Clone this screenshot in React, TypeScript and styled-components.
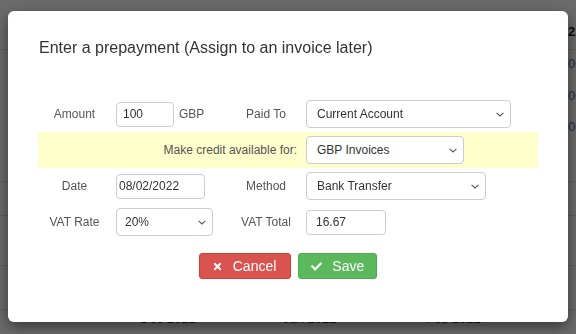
import React from "react";
import styled, { createGlobalStyle } from "styled-components";
import { FaTimes, FaCheck } from "react-icons/fa";

const GlobalStyle = createGlobalStyle`
  html, body { margin: 0; padding: 0; }
  body {
    width: 576px; height: 334px; overflow: hidden;
    background: #fff;
    font-family: "Liberation Sans", Arial, sans-serif;
  }
  * { box-sizing: border-box; }
`;

/* ---------- background page (behind the backdrop) ---------- */
const Page = styled.div`
  width: 760px;
  padding-top: 18px;
`;

const BgTable = styled.div`
  display: grid;
  grid-template-columns: 140px 143px 143px 142px 1fr;
`;

const BgCell = styled.div<{ $h: number; $pt: number; $head?: boolean; $link?: boolean; $line?: boolean }>`
  height: ${(p) => p.$h}px;
  padding-top: ${(p) => p.$pt}px;
  font-size: 13px;
  line-height: 15px;
  font-weight: ${(p) => (p.$head ? 700 : 400)};
  color: ${(p) => (p.$link ? "#337ab7" : "#222")};
  border-bottom: 1px solid ${(p) => (p.$line ? "#ddd" : "transparent")};
  white-space: nowrap;
`;

const Backdrop = styled.div`
  position: fixed;
  inset: 0;
  background: rgba(0, 0, 0, 0.58);
  padding: 11px 8px;
`;

/* ---------- modal ---------- */
const Modal = styled.div`
  width: 560px;
  background: #fff;
  border-radius: 6px;
  box-shadow: 0 5px 15px rgba(0, 0, 0, 0.5);
  padding: 27px 30px 43px 30px;
  color: #333;
`;

const Title = styled.h4`
  margin: 0 0 38px 1px;
  font-size: 16px;
  line-height: 20px;
  font-weight: 400;
  color: #333;
`;

const Form = styled.div`
  display: grid;
  grid-template-columns: 78px 110px 80px 1fr;
  grid-auto-rows: 36px;
  align-items: center;
`;

const Label = styled.label<{ $pr?: number }>`
  font-size: 12px;
  color: #555;
  text-align: center;
  padding-right: ${(p) => p.$pr ?? 0}px;
`;

const Cell = styled.div`
  display: flex;
  align-items: center;
  gap: 5px;
`;

const Highlight = styled.div`
  grid-column: 1 / -1;
  align-self: stretch;
  display: grid;
  grid-template-columns: 268px 1fr;
  align-items: center;
  background: #ffffcc;
`;

const HighlightLabel = styled.label`
  font-size: 12px;
  color: #555;
  text-align: right;
  padding-right: 9px;
`;

const Input = styled.input<{ $w: number; $pl?: number }>`
  width: ${(p) => p.$w}px;
  height: 25px;
  padding: 0 4px 0 ${(p) => p.$pl ?? 6}px;
  border: 1px solid #ccc;
  border-radius: 4px;
  font-family: "Liberation Sans", Arial, sans-serif;
  font-size: 12px;
  color: #333;
  background: #fff;
  outline: none;
`;

const chevron =
  "data:image/svg+xml;utf8," +
  encodeURIComponent(
    '<svg xmlns="http://www.w3.org/2000/svg" width="8" height="5" viewBox="0 0 8 5"><path d="M0.6 0.8 L4 4 L7.4 0.8" fill="none" stroke="#555" stroke-width="1.1"/></svg>'
  );

const Select = styled.select<{ $w: number; $pl?: number }>`
  appearance: none;
  -webkit-appearance: none;
  width: ${(p) => p.$w}px;
  height: 28px;
  padding: 0 20px 0 ${(p) => p.$pl ?? 10}px;
  border: 1px solid #ccc;
  border-radius: 4px;
  font-family: "Liberation Sans", Arial, sans-serif;
  font-size: 12px;
  color: #333;
  background: #fff url("${chevron}") no-repeat right 6px center;
  outline: none;
`;

const Unit = styled.span`
  font-size: 12px;
  color: #555;
`;

const Actions = styled.div`
  display: flex;
  justify-content: center;
  gap: 7px;
  margin-top: 13px;
`;

const Button = styled.button<{ $variant: "danger" | "success"; $pr: number }>`
  display: inline-flex;
  align-items: center;
  height: 26px;
  padding: 0 ${(p) => p.$pr}px 0 12px;
  border: 1px solid ${(p) => (p.$variant === "danger" ? "#d43f3a" : "#4cae4c")};
  border-radius: 3px;
  background: ${(p) => (p.$variant === "danger" ? "#d9534f" : "#5cb85c")};
  color: #fff;
  font-family: "Liberation Sans", Arial, sans-serif;
  font-size: 14px;
  cursor: pointer;

  svg { width: 11px; height: 11px; margin-right: 10px; }
`;

type BgRow = { h: number; pt: number; cells: string[]; head?: boolean; link?: boolean; line?: boolean };

const bgRows: BgRow[] = [
  { h: 32, pt: 6, cells: ["", "Reference", "Due", "Status", "22/02/2022"], head: true, line: true },
  { h: 32, pt: 6, cells: ["", "INV-0041", "Jan 2022", "Paid", "00.00"], link: true },
  { h: 31, pt: 6, cells: ["", "INV-0042", "Jan 2022", "Paid", "00.00"], link: true },
  { h: 69, pt: 6, cells: ["", "INV-0043", "Jan 2022", "Paid", "00.00"], link: true, line: true },
  { h: 34, pt: 6, cells: ["", "", "", "", ""], line: true },
  { h: 50, pt: 6, cells: ["", "", "", "", ""], line: true },
  { h: 44, pt: 6, cells: ["", "", "", "", ""], line: true },
  { h: 30, pt: 1, cells: ["", "Dec 2021", "Jan 2022", "Feb 2022", ""] },
];

export default function App() {
  return (
    <>
      <GlobalStyle />
      <Page>
        <BgTable>
          {bgRows.map((r, i) =>
            r.cells.map((c, j) => (
              <BgCell
                key={`${i}-${j}`}
                $h={r.h}
                $pt={r.pt}
                $head={r.head}
                $link={r.link && j === 4}
                $line={r.line}
              >
                {c}
              </BgCell>
            ))
          )}
        </BgTable>
      </Page>
      <Backdrop>
        <Modal>
          <Title>Enter a prepayment (Assign to an invoice later)</Title>
          <Form>
            <Label $pr={5}>Amount</Label>
            <Cell>
              <Input $w={58} defaultValue="100" />
              <Unit>GBP</Unit>
            </Cell>
            <Label>Paid To</Label>
            <Cell>
              <Select $w={205} defaultValue="Current Account">
                <option>Current Account</option>
                <option>Savings Account</option>
              </Select>
            </Cell>

            <Highlight>
              <HighlightLabel>Make credit available for:</HighlightLabel>
              <Cell>
                <Select $w={158} defaultValue="GBP Invoices">
                  <option>GBP Invoices</option>
                  <option>EUR Invoices</option>
                </Select>
              </Cell>
            </Highlight>

            <Label $pr={5}>Date</Label>
            <Cell>
              <Input $w={89} $pl={2} defaultValue="08/02/2022" />
            </Cell>
            <Label>Method</Label>
            <Cell>
              <Select $w={180} defaultValue="Bank Transfer">
                <option>Bank Transfer</option>
                <option>Cash</option>
                <option>Cheque</option>
              </Select>
            </Cell>

            <Label $pr={5}>VAT Rate</Label>
            <Cell>
              <Select $w={97} $pl={8} defaultValue="20%">
                <option>20%</option>
                <option>5%</option>
                <option>0%</option>
              </Select>
            </Cell>
            <Label>VAT Total</Label>
            <Cell>
              <Input $w={80} $pl={9} defaultValue="16.67" />
            </Cell>
          </Form>
          <Actions>
            <Button $variant="danger" $pr={14}>
              <FaTimes />
              Cancel
            </Button>
            <Button $variant="success" $pr={12}>
              <FaCheck />
              Save
            </Button>
          </Actions>
        </Modal>
      </Backdrop>
    </>
  );
}
